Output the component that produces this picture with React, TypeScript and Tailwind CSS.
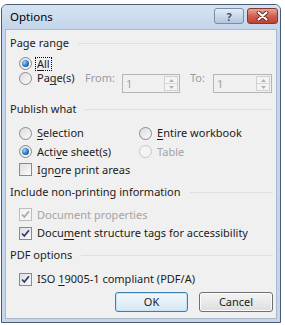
import React from 'react';

function Radio({ checked = false, disabled = false }: { checked?: boolean; disabled?: boolean }) {
  return (
    <span
      className={`flex h-[13px] w-[13px] shrink-0 items-center justify-center rounded-full border ${
        disabled ? 'border-[#c6c6c6] bg-[#f4f4f4]' : 'border-[#8a8a8a] bg-linear-to-br from-[#dcdcdc] to-[#fbfbfb]'
      }`}
    >
      {checked && (
        <span className="h-[7px] w-[7px] rounded-full bg-[radial-gradient(circle_at_35%_35%,#9ad6ff,#2a74bd_55%,#0f3f78)]" />
      )}
    </span>
  );
}

function Check({ checked = false, disabled = false }: { checked?: boolean; disabled?: boolean }) {
  return (
    <span
      className={`flex h-[13px] w-[13px] shrink-0 items-center justify-center border ${
        disabled ? 'border-[#bdbdbd] bg-[#f4f4f4]' : 'border-[#8a8a8a] bg-linear-to-br from-[#dedede] to-[#fbfbfb]'
      }`}
    >
      {checked && (
        <svg width="11" height="11" viewBox="0 0 11 11">
          <path
            d="M2 5.5 L4.3 8 L9 2.2"
            fill="none"
            stroke={disabled ? '#a8a8a8' : '#283c70'}
            strokeWidth="1.7"
          />
        </svg>
      )}
    </span>
  );
}

function GroupHeader({ title, h }: { title: string; h: string }) {
  return (
    <div className={`flex items-center gap-[9px] pl-[4px] pr-[3px] ${h}`}>
      <span className="whitespace-nowrap">{title}</span>
      <div className="h-px flex-1 bg-[#dcdfe3]" />
    </div>
  );
}

function SpinBox({ w }: { w: string }) {
  return (
    <div className={`flex h-[19px] border border-[#b5b5b5] bg-[#f0f0f0] ${w}`}>
      <span className="flex-1 pl-[3px] leading-[17px] text-[#a0a0a0]">1</span>
      <div className="my-[1px] mr-[1px] flex w-[14px] flex-col border border-[#d0d0d0] bg-[#f4f4f4]">
        <div className="flex flex-1 items-center justify-center border-b border-[#d8d8d8]">
          <svg width="5" height="3" viewBox="0 0 5 3">
            <path d="M0 3 L2.5 0 L5 3 Z" fill="#b0b0b0" />
          </svg>
        </div>
        <div className="flex flex-1 items-center justify-center">
          <svg width="5" height="3" viewBox="0 0 5 3">
            <path d="M0 0 L2.5 3 L5 0 Z" fill="#b0b0b0" />
          </svg>
        </div>
      </div>
    </div>
  );
}

export default function App() {
  return (
    <div className="h-[325px] w-[285px] overflow-hidden bg-white pl-[1px] pt-[4px] font-['Noto_Sans',sans-serif] text-[11px] leading-[14px] text-[#1b1b1b]">
      <div className="flex h-[319px] w-[280px] flex-col rounded-t-[6px] border border-[#4a5c72] bg-[#c5d6ea]">
        {/* title bar */}
        <div className="flex h-[24px] items-center rounded-t-[5px] bg-linear-to-b from-[#d7e3f2] to-[#c3d5ea] pl-[8px] pr-[2px]">
          <span className="flex-1 text-[11.5px] text-black">Options</span>
          <div className="flex gap-[3px] self-start pt-[3px]">
            <div className="flex h-[16px] w-[30px] items-center justify-center rounded-[3px] border border-[#7c8ea6] bg-linear-to-b from-[#e4edf8] to-[#b3c6de] text-[11px] font-bold leading-none text-[#3f5472]">
              ?
            </div>
            <div className="flex h-[16px] w-[31px] items-center justify-center rounded-[3px] border border-[#7e3a33] bg-linear-to-b from-[#e7a598] via-[#d0614f] to-[#c2402f]">
              <svg width="13" height="10" viewBox="0 0 13 10">
                <path d="M2.5 1.5 L10.5 8.5 M10.5 1.5 L2.5 8.5" stroke="#5a2420" strokeWidth="3.8" strokeLinecap="round" />
                <path d="M2.5 1.5 L10.5 8.5 M10.5 1.5 L2.5 8.5" stroke="#ffffff" strokeWidth="2.2" strokeLinecap="round" />
              </svg>
            </div>
          </div>
        </div>

        {/* client area */}
        <div className="mx-[3px] mb-[3px] flex flex-1 flex-col border border-[#a9b8ca] bg-[#f0f0f0]">
          <GroupHeader title="Page range" h="h-[26px]" />
          <div className="flex h-[15px] items-center pl-[13px]">
            <Radio checked />
            <span className="ml-[3px] border border-dotted border-black px-[1px] leading-[12px]">
              <u className="underline-offset-2">A</u>ll
            </span>
          </div>
          <div className="flex h-[23px] items-start pl-[13px]">
            <div className="flex h-[14px] w-[66px] items-center">
              <Radio />
              <span className="ml-[5px]">
                Pa<u className="underline-offset-2">g</u>e(s)
              </span>
            </div>
            <span className="w-[37px] text-[#9b9b9b]">From:</span>
            <div className="mt-[3px]">
              <SpinBox w="w-[58px]" />
            </div>
            <span className="ml-[10px] w-[23px] text-[#9b9b9b]">To:</span>
            <div className="mt-[3px]">
              <SpinBox w="w-[59px]" />
            </div>
          </div>

          <GroupHeader title="Publish what" h="h-[30px]" />
          <div className="flex h-[18px] items-center pl-[13px]">
            <div className="flex w-[120px] items-center">
              <Radio />
              <span className="ml-[5px]">
                <u className="underline-offset-2">S</u>election
              </span>
            </div>
            <Radio />
            <span className="ml-[5px]">
              <u className="underline-offset-2">E</u>ntire workbook
            </span>
          </div>
          <div className="flex h-[19px] items-center pl-[13px]">
            <div className="flex w-[120px] items-center">
              <Radio checked />
              <span className="ml-[5px]">
                Acti<u className="underline-offset-2">v</u>e sheet(s)
              </span>
            </div>
            <Radio disabled />
            <span className="ml-[5px] text-[#a3a3a3]">Table</span>
          </div>
          <div className="flex h-[17px] items-center pl-[13px]">
            <Check />
            <span className="ml-[5px]">
              Ign<u className="underline-offset-2">o</u>re print areas
            </span>
          </div>

          <GroupHeader title="Include non-printing information" h="h-[28px]" />
          <div className="flex h-[17px] items-center pl-[13px]">
            <Check checked disabled />
            <span className="ml-[5px] text-[#a3a3a3]">Document properties</span>
          </div>
          <div className="flex h-[20px] items-center pl-[13px]">
            <Check checked />
            <span className="ml-[5px]">
              Docu<u className="underline-offset-2">m</u>ent structure tags for accessibility
            </span>
          </div>

          <GroupHeader title="PDF options" h="h-[24px]" />
          <div className="flex h-[24px] items-center pl-[13px]">
            <Check checked />
            <span className="ml-[5px]">
              ISO <u className="underline-offset-2">1</u>9005-1 compliant (PDF/A)
            </span>
          </div>

          <div className="flex justify-end gap-[11px] pr-[3px] pt-[1px]">
            <button className="flex h-[20px] w-[73px] items-center justify-center rounded-[3px] border border-[#3c7fb1] bg-linear-to-b from-[#f2f8fc] to-[#d6e7f3] shadow-[inset_0_0_0_1px_#c7e2f5]">
              OK
            </button>
            <button className="flex h-[20px] w-[74px] items-center justify-center rounded-[3px] border border-[#707070] bg-linear-to-b from-[#f4f4f4] to-[#dedede] shadow-[inset_0_0_0_1px_#fcfcfc]">
              Cancel
            </button>
          </div>
        </div>
      </div>
    </div>
  );
}
